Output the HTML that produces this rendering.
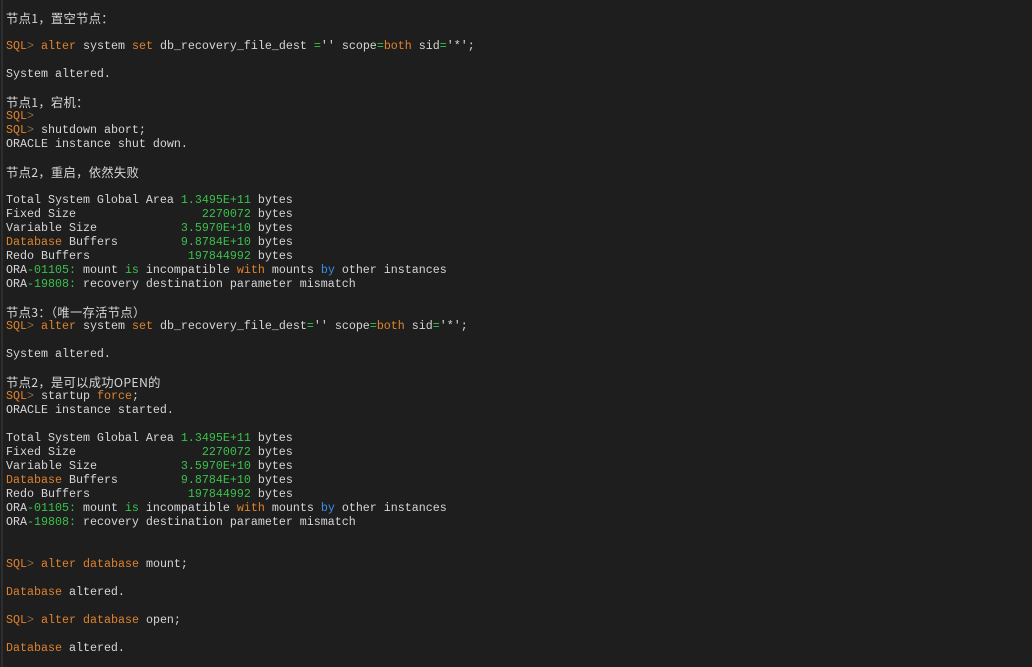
<!DOCTYPE html>
<html><head><meta charset="utf-8"><style>
html,body{margin:0;padding:0;background:#1e1e1e;width:1032px;height:667px;overflow:hidden}
pre{margin:0;padding:11px 0 0 6px;font-family:"Liberation Mono","Noto Sans CJK SC",monospace;font-size:11.67px;line-height:14px;color:#d6d6d6;border-left:2px solid #2e2e2e;margin-left:1px;height:656px;padding-left:3px}
.o{color:#e0822d}.g{color:#39c24a}.b{color:#3b8ee6}.d{color:#8a6a40}
.c{font-family:"Noto Sans CJK SC",sans-serif;font-size:12.3px;display:inline-block;height:14px;line-height:14px;vertical-align:top;overflow:visible;position:relative;top:0px;letter-spacing:0.3px}
</style></head><body><pre><span class="c">节点1，置空节点：</span>

<span class="o">SQL</span><span class="d">&gt;</span> <span class="o">alter</span> system <span class="o">set</span> db_recovery_file_dest <span class="g">=</span>'' scope<span class="g">=</span><span class="o">both</span> sid<span class="g">=</span>'*';

System altered.

<span class="c">节点1，宕机：</span>
<span class="o">SQL</span><span class="d">&gt;</span>
<span class="o">SQL</span><span class="d">&gt;</span> shutdown abort;
ORACLE instance shut down.

<span class="c">节点2，重启，依然失败</span>

Total System Global Area <span class="g">1.3495E+11</span> bytes
Fixed Size                  <span class="g">2270072</span> bytes
Variable Size            <span class="g">3.5970E+10</span> bytes
<span class="o">Database</span> Buffers         <span class="g">9.8784E+10</span> bytes
Redo Buffers              <span class="g">197844992</span> bytes
ORA<span class="g">-01105:</span> mount <span class="g">is</span> incompatible <span class="o">with</span> mounts <span class="b">by</span> other instances
ORA<span class="g">-19808:</span> recovery destination parameter mismatch

<span class="c">节点3：（唯一存活节点）</span>
<span class="o">SQL</span><span class="d">&gt;</span> <span class="o">alter</span> system <span class="o">set</span> db_recovery_file_dest<span class="g">=</span>'' scope<span class="g">=</span><span class="o">both</span> sid<span class="g">=</span>'*';

System altered.

<span class="c">节点2，是可以成功OPEN的</span>
<span class="o">SQL</span><span class="d">&gt;</span> startup <span class="o">force</span>;
ORACLE instance started.

Total System Global Area <span class="g">1.3495E+11</span> bytes
Fixed Size                  <span class="g">2270072</span> bytes
Variable Size            <span class="g">3.5970E+10</span> bytes
<span class="o">Database</span> Buffers         <span class="g">9.8784E+10</span> bytes
Redo Buffers              <span class="g">197844992</span> bytes
ORA<span class="g">-01105:</span> mount <span class="g">is</span> incompatible <span class="o">with</span> mounts <span class="b">by</span> other instances
ORA<span class="g">-19808:</span> recovery destination parameter mismatch


<span class="o">SQL</span><span class="d">&gt;</span> <span class="o">alter</span> <span class="o">database</span> mount;

<span class="o">Database</span> altered.

<span class="o">SQL</span><span class="d">&gt;</span> <span class="o">alter</span> <span class="o">database</span> open;

<span class="o">Database</span> altered.
</pre></body></html>
